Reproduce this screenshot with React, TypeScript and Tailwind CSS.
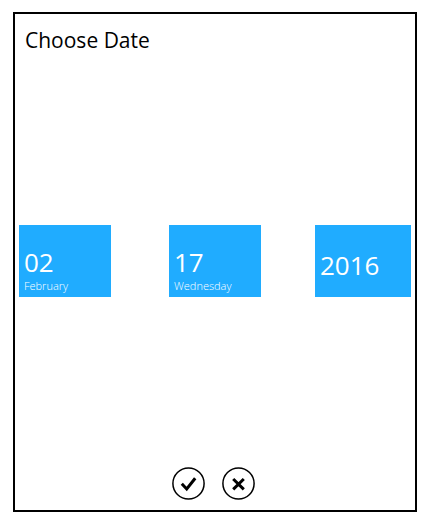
import type { ReactNode } from "react";

type TileProps = { label: string; value: string; caption?: string };

function DateTile({ label, value, caption }: TileProps) {
  return (
    <button
      type="button"
      aria-label={label}
      className={
        "flex h-[72px] flex-col items-start bg-[#20acff] px-[5px] text-left text-white " +
        (caption ? "w-[92px] justify-end pb-[3px]" : "w-24 justify-center pt-2")
      }
    >
      <span className="text-[26px] leading-8">{value}</span>
      {caption && <span className="text-[11px] leading-4 font-light">{caption}</span>}
    </button>
  );
}

function RoundButton({ label, children }: { label: string; children: ReactNode }) {
  return (
    <button type="button" aria-label={label} className="size-[33px]">
      <svg viewBox="0 0 33 33" className="size-full" fill="none" stroke="#000">
        <circle cx="16.5" cy="16.5" r="15.6" strokeWidth="1.5" />
        {children}
      </svg>
    </button>
  );
}

export default function App() {
  return (
    <div className="flex min-h-screen bg-white pt-3 pr-4 pb-[18px] pl-[13px] font-['Open_Sans','Noto_Sans',sans-serif] text-black">
      <main className="flex flex-1 flex-col border-2 border-black px-1">
        <h1 className="px-1.5 pt-3 text-[21px] leading-7">Choose Date</h1>
        <div className="grid flex-1 grid-cols-[150fr_146fr_96px] items-center">
          <DateTile label="Month: 02 February" value="02" caption="February" />
          <DateTile label="Day: 17 Wednesday" value="17" caption="Wednesday" />
          <DateTile label="Year: 2016" value="2016" />
        </div>
        <div className="flex justify-center gap-[17px] pr-[3px] pb-2.5">
          <RoundButton label="Accept">
            <path d="M9.8 16.8 L14.7 22 L23.2 11.2" strokeWidth="3" />
          </RoundButton>
          <RoundButton label="Cancel">
            <path d="M11.2 12 L21.8 22.4 M21.8 12 L11.2 22.4" strokeWidth="3" />
          </RoundButton>
        </div>
      </main>
    </div>
  );
}
